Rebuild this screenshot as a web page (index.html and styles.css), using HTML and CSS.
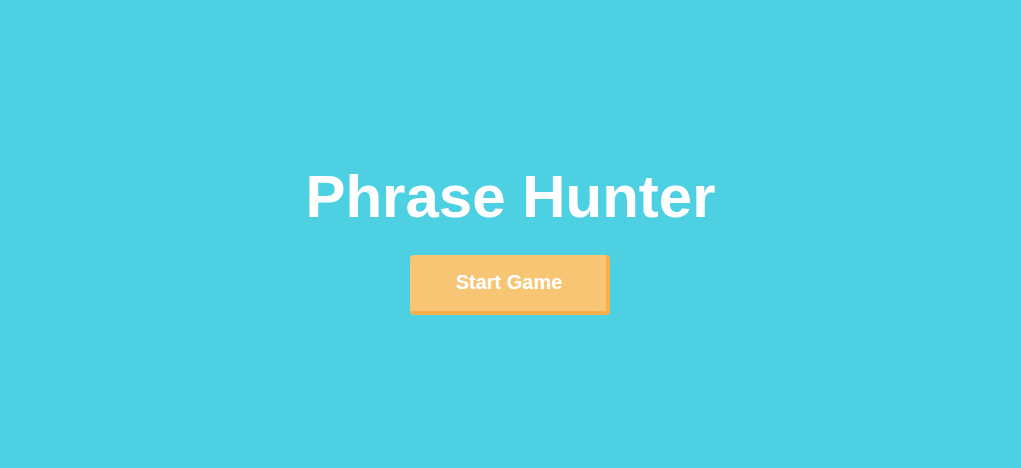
FILE: index.html
```html
<!DOCTYPE html>
<html>
<head>
<meta charset="utf-8">
<link rel="stylesheet" href="styles.css">
</head>
<body>
<main class="overlay">
  <h1 class="title">Phrase Hunter</h1>
  <button class="btn-reset">Start Game</button>
</main>
</body>
</html>
```
FILE: styles.css
```css
html, body {
  margin: 0;
  height: 100%;
}
body {
  background: #4dd0e1;
  font-family: "Liberation Sans", Arial, sans-serif;
}
.overlay {
  min-height: 100%;
  box-sizing: border-box;
  padding-top: 8px;
  display: flex;
  flex-direction: column;
  align-items: center;
  justify-content: center;
}
.title {
  margin: 0 0 24px;
  color: #fff;
  font-size: 60px;
  font-weight: bold;
  line-height: normal;
}
.btn-reset {
  box-sizing: border-box;
  width: 200px;
  height: 60px;
  margin-right: 1px;
  border: none;
  border-right: 4px solid #f5b04a;
  border-bottom: 4px solid #f5b04a;
  border-radius: 4px;
  background: #f7c574;
  color: #fff;
  font-family: "Liberation Sans", Arial, sans-serif;
  font-size: 20px;
  font-weight: bold;
  padding: 0 0 0 2px;
  cursor: pointer;
}
```
